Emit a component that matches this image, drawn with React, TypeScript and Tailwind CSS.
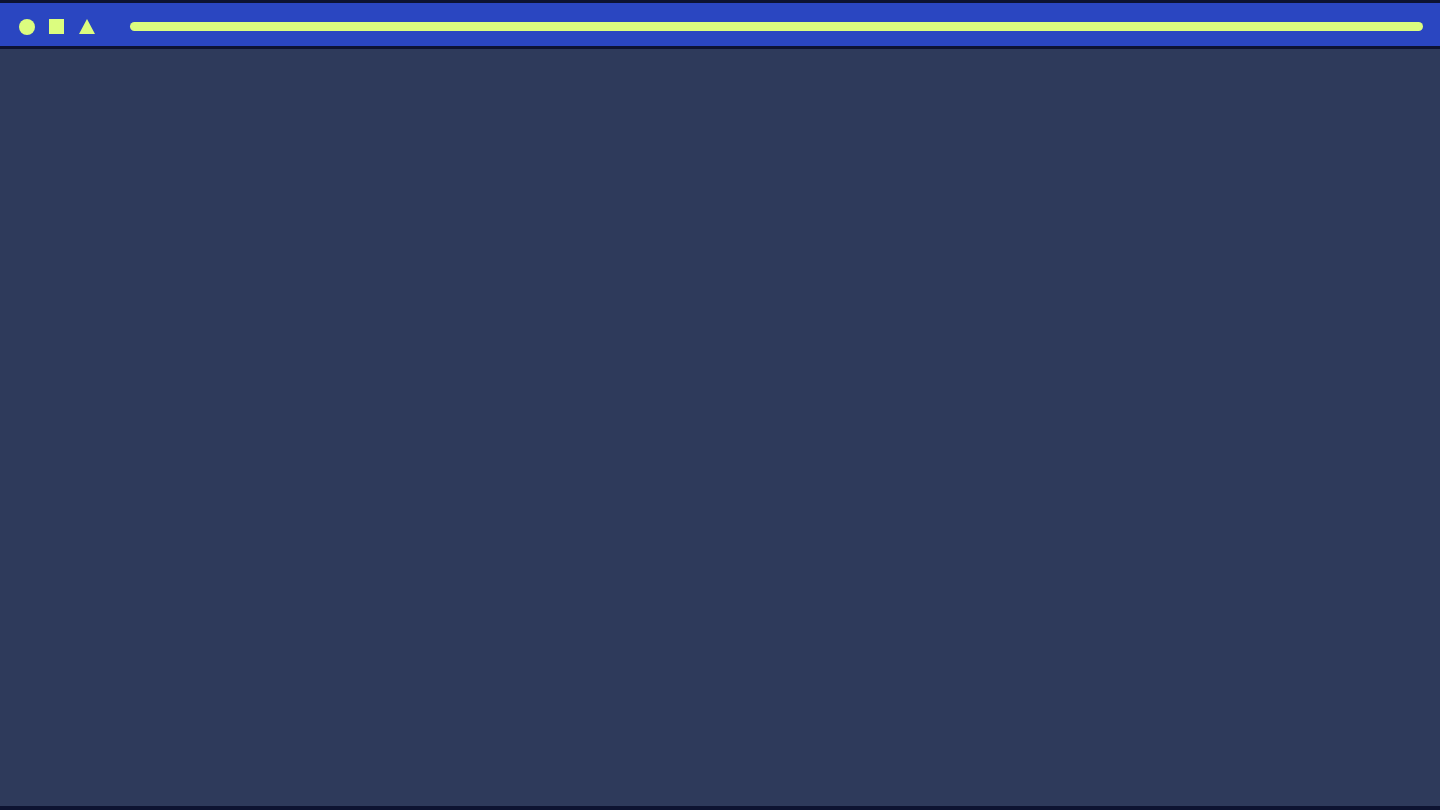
import React from "react";

export default function App() {
  return (
    <div className="flex h-[810px] w-[1440px] flex-col overflow-hidden bg-[#2e3a5b] font-['Liberation_Sans',sans-serif]">
      <header className="flex h-[49px] shrink-0 items-center border-t-[3px] border-b-[3px] border-[#0d1331] bg-[#2a46c1] pt-[4px] pl-[19px] pr-[17px]">
        <div className="flex items-center">
          <span className="block h-[16px] w-[16px] rounded-full bg-[#dcfd7f]" />
          <span className="ml-[14px] block h-[15px] w-[15px] bg-[#dcfd7f]" />
          <svg className="ml-[15px] block" width="16" height="15" viewBox="0 0 16 15">
            <polygon points="8,0 16,15 0,15" fill="#dcfd7f" />
          </svg>
        </div>
        <div className="ml-[35px] h-[9px] flex-1 rounded-full bg-[#dcfd7f]" />
      </header>
      <main className="flex-1 bg-[#2e3a5b]" />
      <div className="h-[4px] shrink-0 bg-[#0d1331]" />
    </div>
  );
}
